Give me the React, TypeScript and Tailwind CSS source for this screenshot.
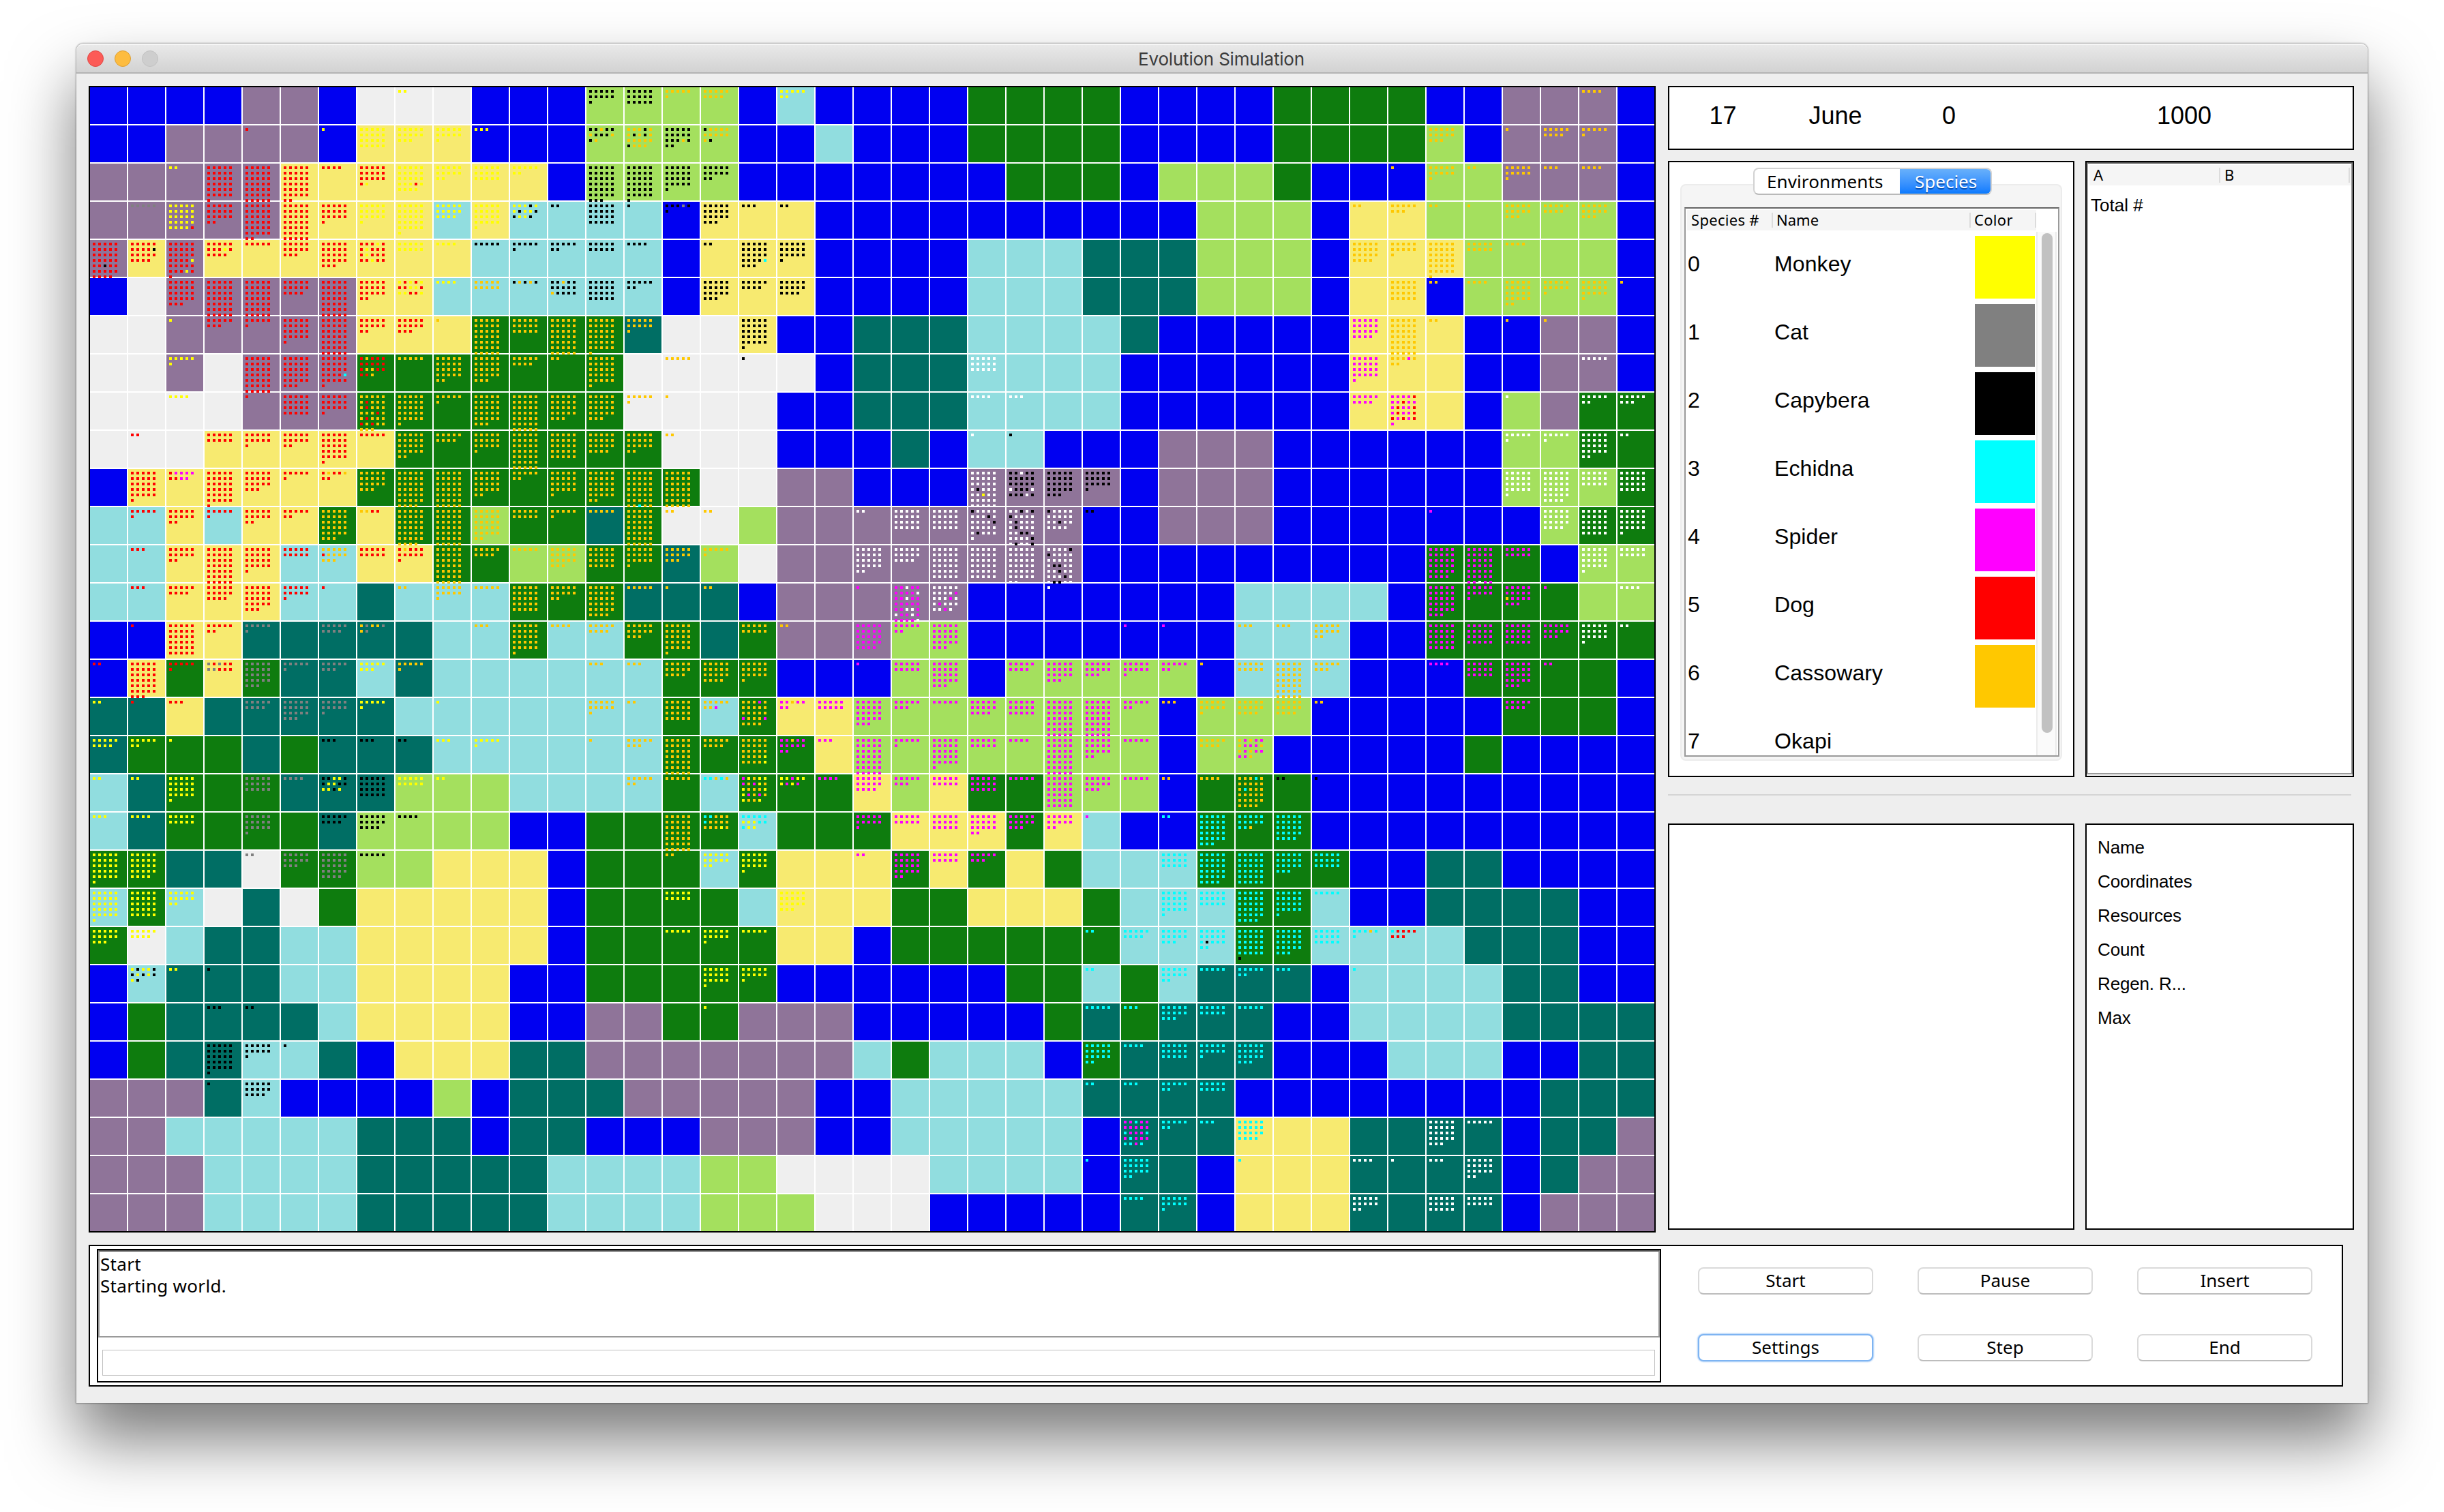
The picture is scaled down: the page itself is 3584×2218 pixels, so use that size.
import React from "react";

const UI = "font-['Noto_Sans','Open_Sans',sans-serif]";
const HELV = "font-['Liberation_Sans',Arial,sans-serif]";

const TERRAIN_COLORS: Record<string, string> = {
  B: "bg-[#0000f1]",
  P: "bg-[#8f7499]",
  W: "bg-[#efefef]",
  Y: "bg-[#f7ea70]",
  L: "bg-[#a4e05e]",
  C: "bg-[#91dddf]",
  G: "bg-[#0e7c0e]",
  T: "bg-[#006e64]",
};

const SPECIES_COLORS: Record<string, string> = {
  y: "bg-[#ffff00]",
  g: "bg-[#808080]",
  k: "bg-[#000000]",
  c: "bg-[#00ffff]",
  m: "bg-[#ff00ff]",
  r: "bg-[#ff0000]",
  o: "bg-[#ffc800]",
  w: "bg-[#ffffff]",
};

/* One letter per cell, one string per row of the world. */
const TERRAIN = [
  "BBBBPPBWWWBBBLLLLBCBBBBGGGGBBBBGGGGBBPPPB",
  "BBPPPPBYYYBBBLLLLBBCBBBGGGGBBBBGGGGLBPPPB",
  "PPPPPYYYYYYYBLLLLBBBBBBBGGGBLLLGBBBLLPPPB",
  "PPPPPYYYYCYCCCCBYYYBBBBBBBBBBLLLBYYLLLLLB",
  "PYPYYYYYYYCCCCCBYYYBBBBCCCTTTLLLBYYYLLLLB",
  "BWPPPPPYYCCCCCCBYYYBBBBCCCTTTLLLBYYBLLLLB",
  "WWPPPPPYYYGGGGTWWYBBTTTCCCCTBBBBBYYYBBPPB",
  "WWPWPPPGGGGGGGWWWWWBTTTCCCCBBBBBBYYYBBPPB",
  "WWWWPPPGGGGGGGWWWWBBTTTCCCCBBBBBBYYYBLPGG",
  "WWWYYYYYGGGGGGGWWWBBBTBCCBBBPPPBBBBBBLLGG",
  "BYYYYYYGGGGGGGGGWWPPBBBPPPPBPPPBBBBBBLLLG",
  "CCYCYYGYGGLGGTGWWLPPPPPPPPBBPPPBBBBBBBLGG",
  "CCYYYCCYYGGLLGGTLWPPPPPPPPBBBBBBBBBGGGBLL",
  "CCYYYCCTCCCGGGTTTBPPPPPBBBBBBBCCCCBGGGGLL",
  "BBYYTTTTTCCGCCGGTGPPPLLBBBBBBBCCCBBGGGGGG",
  "BYGYGTTCTCCCCCCGGGBBBLLBLLLLLBCCCBBBGGGGB",
  "TTYTTTTTCCCCCCCGCGYYLLLLLLLLBLLLBBBBBGGGB",
  "TGGGTGTTTCCCCCCGGGGYLLLLLLLLBLLBBBBBGBBBB",
  "CTGGGTTTLLLCCCCGCGGGYLYGGLLLBGGGBBBBBBBBB",
  "CTGGGGTLLLLBBGGGGCGGGYYYGYCBBGGGBBBBBBBBB",
  "GGTTWGGLLYYYBGGGCGYYYGYGYGCCCGGGGBBTTBBBB",
  "CGCWTWGYYYYYBGGGGCYYYGGYYYGCCCGGCBBTTTTBB",
  "GWCTTCCYYYYYBGGGGGYYBGGGGGGCCCGGCCCCTTTBB",
  "BCTTTCCYYYYBBGGGGGBBBBBBGGCGCTTTBCCCCTTBB",
  "BGTTTTCYYYYBBPPGGPPPBBBBBGTGTTTBBCCCCTTTT",
  "BGTTCCTBYYYTTPPPPPPPCGCCCBGTTTTBBBCCCBBTT",
  "PPPTCBBBBLBTTTPPPPPBBCCCCCTTTTBBBBBBBBTTT",
  "PPCCCCCTTTBTTBBBPPPBBCCCCCBTTTYYYTTTTBTTP",
  "PPPCCCCTTTTTCCCCLLWWWWCCCCBTTBYYYTTTTBTPP",
  "PPPCCCCTTTTTCCCCLLLWWWBBBBBTTBYYYTTTTBPPP",
];

/* Creatures living in each cell: "column:runs", a run being a species letter and a count. */
const CREATURES = [
  "8:y2 13:k11 14:k15 15:o6 16:o9 18:y7 39:o4",
  "4:r1 6:y1 7:y20 8:y13 9:y11 10:y3 13:k2o1k2o1k3o1k1o1 14:o3k1o2k1o1k1o6k1o3 15:k13o1k3 16:k1o10k1 35:o13 37:o1 38:o9 39:o6",
  "2:y2 3:r31 4:r35 5:r32 6:r4 7:r16y1 8:y18r1y5 9:y12 10:y15 11:y7 13:k33 14:k31 15:k21 16:k12 34:o1 35:o11 36:o2 37:o11 38:o3 39:o4",
  "1:g5 2:y24r1 3:r17 4:r32 5:r35 6:r16 7:y16 8:y26 9:y14 10:y21 11:y3k1y2k1y2k2y2k1 12:k2 13:k20 14:k1 15:k3g1k2 16:k18 17:k3 18:k2 33:o2 34:o8 35:o2 36:o1 37:o13 38:o9 39:o13",
  "0:r22k1r11 1:r9k1r9 2:r19y1r8y1r2 3:r8y1r5 4:r5 5:r13 6:r23 7:r3y1r2y1r4y1r5y1r2 8:y10 9:y4 10:k5 11:k6 12:k7 13:k10 14:k4 16:k2 17:k19c1k3 18:k16 33:o19 34:o11 35:o31 36:o10 37:o4",
  "2:r23 3:r35 4:r35 5:r14 6:r35 7:r17 8:y1r1y1r1y1r2y2r1y2r2y1 9:y4 10:o10 11:k1o1k1o1k1 12:k2o1k7o1k4 13:k20 14:k7 16:k18 17:k9 18:k14 34:o20 35:o2 36:o4 37:o22 38:o11 39:o16 40:o1",
  "2:y1 3:r8 4:r6 5:r21 6:r35 7:r12 8:r13 9:o1 10:o35 11:o15 12:o35 13:o31 14:o11 17:k26 33:m19 34:o35 35:o2 37:o1 38:o1",
  "2:y6 4:r35 5:r28 6:r19c1r6 7:r1o1r9o2r4o1 8:o5 9:o22 10:o23 11:o9 12:o2 13:o26 15:o5 17:k1 23:w15 33:m21 34:o3m1o3 39:w5",
  "2:y4 4:r1 5:r20 6:r16 7:o6r1o4r1o6r1o2r1o3r1o1r1o5 8:o26 9:o6 10:o28 11:o35 12:o23 13:o23 14:o6 15:o1 23:w4 24:w3 33:m9 34:m4r1m2r1m3r1m2r1m1r1m2r2m1r1m1r1m1 37:w1 39:w7 40:w8",
  "1:r2 3:r10 4:r11 5:r12 6:r26 7:r5 8:o22 9:o9 10:o16 11:o35 12:o25 13:o19 14:o17 15:o2 23:w1 24:k1 37:w6 38:w6 39:w22 40:w2",
  "1:r26 2:r1m4r2m2 3:r31 4:r18 5:r6 6:r1o1r2o1r2 7:o18 8:o34 9:o35 10:o22 11:o7 12:o21 13:o27 14:o32c1o2 15:o35 23:w16k1w5y1w12 24:k2w1k12w1k3w1k3w1k1 25:k23 26:k16 37:w21 38:w29 39:w15 40:w20",
  "1:r6 2:r12 3:r6 4:r12 5:r7 6:o28 7:o2r2 8:o34 9:o35 10:o27 11:o10 12:o6 13:o5 14:o35 15:o2 16:o2 20:w2 21:w20 22:w20 23:k1w7k1w5k1w6k1w4 24:w2k1w1k2w5k1w4k1w5k2w5k1w1k1w2k1 25:k1w11k1w6 26:k2 35:m1 38:w19 39:w25 40:w21",
  "1:r3 2:r12 3:r35 4:r21 5:r10 6:o5r1o7 7:r10 8:r1o1r9 9:o35 10:o9 11:o5 12:o18 13:o20 14:o16 15:o13 16:o6 20:w22 21:w14 22:w30 23:w30 24:w32 25:w4k2w10k2w4k1w5k1w2k2w2 35:m29 36:m32w1m2 37:m10 39:w21 40:w10",
  "1:r3 2:r9 3:r14 4:r23 5:r11 6:r1 8:o2 9:o11 10:o5 11:o25 12:o12 13:o29 14:o5 15:o1 16:o2 20:m1 21:m2w1m6w1m2w1m9w2m1w1m2w1m5w1 22:w9m1w3m1w2m1w5m1w1 25:w1 35:m28 36:m11 37:m10o1m7 38:m1 40:w4",
  "1:r1 2:r30 3:r7 4:g6 6:g9 7:o1g1o2g1o1g1 10:o3 11:o26 12:o4 13:o9 14:o13 15:o26 17:o10 18:o2 20:m24 21:m7 22:m23 27:m1 28:m1 30:o3 31:o3 32:o12 35:m25 36:m20 37:m20 38:m13 39:w16 40:w2",
  "0:r2 1:r33 2:r6 3:g1r1g1r2g2r3 4:g23 5:g6 6:g8 7:y8 8:o6 13:o3 14:o3 15:o14 16:o19 17:o16 20:m1 21:m10 22:m23 24:m9 25:m18 26:m13 27:m11 28:m7 29:o1 30:o10 31:o35 32:o8 35:m4 36:m15 37:m23 38:m2",
  "0:y2 1:r1 2:r3 4:g9 5:g18 6:g11 7:y6 9:y1 13:o11 14:o2 15:o20 16:o7m1 17:o3m1o11m1o3m1o4 18:m2o1m4 19:m10 20:m23 21:m8 22:m5 23:m14 24:m15 25:m35 26:m35 27:m7 28:o3 29:o11 30:o14 31:o14 32:o2 37:m9",
  "0:y9 1:y7 2:y1 6:k3 7:k3 8:k2 9:y3 10:y6 13:o1 14:o8 15:o35 16:o9 17:o19y1o4y1 18:m2o1m9 19:m3 20:m35 21:m6 22:m26 23:m10 24:m4 25:m35 26:m17 27:m5 29:o9 30:o1m1o1m2o1m3o2m1o1m4o1",
  "0:y2 1:y2 2:y21 4:g15 5:g4 6:k2y2k2y2k2y2k1y1 7:k20 8:y10 9:y2 14:o7 15:o5 16:c2o1c1o1 17:m1y1o1y2m1o1m1y1o1y1o3y2m1o1m1o1y1o2y1 18:y2m1y3m1y1m1 19:m4 20:m14 21:m8 22:m10 23:m15 24:m5 25:m30 26:m13 27:m5 28:o2 29:o4 30:o3c1o7c1o17 31:k2 32:k1",
  "0:y3 1:y4 2:y10 4:g16 6:k9 7:k14 8:k4 15:o35 16:c2o3c1o7y1o1 17:c5y3c3y2 20:m11 21:m10 22:m15 23:m17 24:m13 25:m12 26:m1 28:c2 29:c28 30:c12o1 31:c24",
  "0:y26 1:y24 4:g2 5:g13 6:g24 7:k5 15:o2 16:y12 17:y16 20:m2 21:m22 22:m10 23:m8 28:c15 29:c29 30:c30 31:c18 32:c15",
  "0:y26 1:y25 2:y12 15:y10 18:y18 28:c21 29:c15 30:c29 31:c21 32:c5",
  "0:y13 1:y9 15:y5 16:y11 17:y5 26:c2 27:c9 28:c13 29:c11k1c5 30:c25k1 31:c23 32:c15 33:c3o1c2 34:c1r7",
  "1:y1k1y2k2y1k1y1k1y1k1 2:y2 3:k1 16:y16 17:y11 26:c2 28:c12 29:c5 30:c7 31:c3 33:c1",
  "3:k3 4:k2 16:y1 26:c5 27:c3 28:c13 29:c10 30:c5",
  "3:k26 4:k11 5:k1 26:c17 27:c4 28:c15 29:c11 30:c18",
  "3:k1 4:k14 26:c2 27:c3 28:c7 29:c10",
  "27:m2c1m7c1m3c1m1c1m3c2m1c1 28:c7 29:c3 30:c19 35:w23 36:w5",
  "26:c1 27:c17 30:c1 33:w4 34:w1 35:w3 36:w17",
  "27:c4 28:c11 33:w12 35:w15 36:w10",
];

const POPULATION: Record<number, string>[] = CREATURES.map((line) => {
  const row: Record<number, string> = {};
  line.split(" ").forEach((entry) => {
    const [col, runs] = entry.split(":");
    row[Number(col)] = runs.replace(/([a-z])(\d+)/g, (_, s: string, n: string) => s.repeat(Number(n)));
  });
  return row;
});

function Cell({ terrain, creatures }: { terrain: string; creatures?: string }) {
  return (
    <div className={`h-[54px] w-[54px] ${TERRAIN_COLORS[terrain]}`}>
      {creatures && (
        <div className="flex w-11 flex-wrap gap-1 pt-1 pl-1">
          {creatures.split("").map((s, i) => (
            <i key={i} className={`block size-1 ${SPECIES_COLORS[s]}`} />
          ))}
        </div>
      )}
    </div>
  );
}

function World() {
  return (
    <div className="grid w-[2298px] grid-cols-[repeat(41,54px)] gap-[2px] border-2 border-black bg-white">
      {TERRAIN.map((row, r) =>
        row.split("").map((t, c) => <Cell key={`${r}-${c}`} terrain={t} creatures={POPULATION[r][c]} />)
      )}
    </div>
  );
}

function TitleBar() {
  return (
    <div className="flex h-11 items-center rounded-t-[10px] border-t-2 border-b-2 border-t-[#f6f6f6] border-b-[#b3b3b3] bg-linear-to-b from-[#e9e9e9] to-[#d2d2d2] pl-4">
      <div className="flex w-[240px] gap-4">
        <span className="size-6 rounded-full border border-[#df4744] bg-[#fc5b57]" />
        <span className="size-6 rounded-full border border-[#de9f34] bg-[#fdbc40]" />
        <span className="size-6 rounded-full border border-[#c2c2c2] bg-[#cecece]" />
      </div>
      <div className="w-[2846px] pt-[2px] text-center font-['Inter',sans-serif] text-[26px] leading-[38px] tracking-[-0.2px] text-[#3c3c3c]">
        Evolution Simulation
      </div>
    </div>
  );
}

function DatePanel() {
  return (
    <div className={`flex h-[94px] border-2 border-black bg-white text-center text-[36px] leading-[84px] text-black ${HELV}`}>
      <span className="w-[157px]">17</span>
      <span className="w-[173px]">June</span>
      <span className="w-[160px]">0</span>
      <span className="ml-[35px] w-[460px]">1000</span>
    </div>
  );
}

const SPECIES = [
  ["Monkey", "bg-[#ffff00]"],
  ["Cat", "bg-[#808080]"],
  ["Capybera", "bg-[#000000]"],
  ["Echidna", "bg-[#00ffff]"],
  ["Spider", "bg-[#ff00ff]"],
  ["Dog", "bg-[#ff0000]"],
  ["Cassowary", "bg-[#ffc800]"],
  ["Okapi", "bg-white"],
];

function SpeciesPanel() {
  return (
    <div className="relative h-[904px] w-[596px] border-2 border-black bg-white px-4 pt-8">
      <div className="h-[846px] rounded-lg border-2 border-[#ececec] bg-[#f5f5f5] pt-8 pr-[2px] pl-1">
        <div className="flex h-[806px] flex-col overflow-hidden border-2 border-[#9a9a9a] border-t-[#666] bg-white">
          <div className={`mt-[2px] ml-[2px] flex h-[30px] w-[512px] shrink-0 items-center bg-[#f5f5f5] text-[22px] tracking-[0.3px] text-black ${UI}`}>
            <span className="w-[124px] pb-[2px] pl-[6px] leading-[26px]">Species #</span>
            <span className="h-[22px] w-[2px] bg-[#dcdcdc]" />
            <span className="w-[288px] pb-[2px] pl-[5px] leading-[26px] tracking-normal">Name</span>
            <span className="h-[22px] w-[2px] bg-[#dcdcdc]" />
            <span className="w-[94px] pb-[2px] pl-[5px] leading-[26px]">Color</span>
            <span className="h-[22px] w-[2px] bg-[#dcdcdc]" />
          </div>
          <div className="flex min-h-0 flex-1">
            <div className={`w-[514px] pt-1 text-[32px] leading-[90px] tracking-[0.1px] text-black ${HELV}`}>
              {SPECIES.map(([name, color], i) => (
                <div key={name} className="flex h-[100px]">
                  <span className="w-[130px] pl-[3px]">{i}</span>
                  <span className="w-[294px]">{name}</span>
                  <span className={`mt-1 h-[92px] w-[88px] ${color}`} />
                </div>
              ))}
            </div>
            <div className="mt-[2px] w-[30px] border-x-2 border-[#ebebeb] bg-[#fafafa] pt-[2px] pl-[6px]">
              <div className="h-[733px] w-4 rounded-full bg-[#c1c1c1]" />
            </div>
          </div>
        </div>
      </div>
      <div className={`absolute top-2 left-[123px] flex h-10 w-[350px] overflow-hidden rounded-lg border-2 border-[#d2d2d2] border-b-[#b9b9b9] bg-white text-[26px] leading-9 text-black ${UI}`}>
        <span className="w-[213px] pl-[18px] tracking-[0.1px]">Environments</span>
        <span className="-my-[2px] -mr-[2px] flex-1 border-b-2 border-[#1a66e8] bg-linear-to-b from-[#6cb3fa] to-[#067aff] pl-[22px] leading-10 text-white [text-shadow:0_2px_1px_#0a4fae]">
          Species
        </span>
      </div>
    </div>
  );
}

function TotalsPanel() {
  return (
    <div className="h-[904px] w-[394px] border-2 border-black bg-white pb-[2px]">
      <div className="h-[898px] border-2 border-[#9a9a9a] border-t-[#555] pt-[2px] pl-[2px] text-black">
        <div className={`flex h-[30px] w-[384px] items-center bg-[#f5f5f5] text-[22px] leading-[26px] ${UI}`}>
          <span className="w-[190px] pb-[2px] pl-[6px]">A</span>
          <span className="h-[22px] w-[2px] bg-[#dcdcdc]" />
          <span className="w-[188px] pb-[2px] pl-[6px]">B</span>
          <span className="h-[22px] w-[2px] bg-[#dcdcdc]" />
        </div>
        <div className={`pt-[9px] pl-[2px] text-[26px] leading-[40px] ${HELV}`}>Total #</div>
      </div>
    </div>
  );
}

function DetailsPanel() {
  return (
    <div className={`h-[596px] w-[394px] border-2 border-black bg-white pt-2 pl-4 text-[26px] leading-[50px] tracking-[-0.15px] text-black ${HELV}`}>
      {["Name", "Coordinates", "Resources", "Count", "Regen. R...", "Max"].map((label) => (
        <div key={label}>{label}</div>
      ))}
    </div>
  );
}

function ActionButton({ label, focused }: { label: string; focused?: boolean }) {
  return (
    <button
      className={`h-10 w-[257px] rounded-lg border-2 bg-white pb-[2px] text-[26px] leading-[34px] text-black ${UI} ${
        focused ? "border-[#7eb4f2] shadow-[0_0_2px_1px_#a9cdf7]" : "border-[#dadada] border-b-[#bdbdbd]"
      }`}
    >
      {label}
    </button>
  );
}

function ControlBar() {
  return (
    <div className="mt-[18px] ml-[18px] flex h-[208px] w-[3306px] border-2 border-black bg-white pt-1 pl-[10px]">
      <div className="h-[196px] w-[2294px] border-2 border-black">
        <div className={`h-[128px] border-2 border-[#9a9a9a] border-t-[#555] pt-[2px] pl-[1px] text-[26px] leading-8 tracking-[0.3px] text-black ${UI}`}>
          <div>Start</div>
          <div>Starting world.</div>
        </div>
        <input className="mt-[18px] ml-[6px] block h-[38px] w-[2277px] border border-[#c0c0c0] bg-white outline-none" />
      </div>
      <div className="mt-[27px] ml-[54px] grid h-[138px] grid-cols-[repeat(3,257px)] content-between gap-x-[65px]">
        <ActionButton label="Start" />
        <ActionButton label="Pause" />
        <ActionButton label="Insert" />
        <ActionButton label="Settings" focused />
        <ActionButton label="Step" />
        <ActionButton label="End" />
      </div>
    </div>
  );
}

export default function App() {
  return (
    <div className="h-[2218px] w-[3584px] overflow-hidden bg-white pt-16 pl-28">
      <div className="h-[1994px] w-[3360px] rounded-t-[10px] bg-[#eeeeee] shadow-[0_0_2px_1px_rgba(0,0,0,0.3),0_54px_96px_rgba(0,0,0,0.53)]">
        <TitleBar />
        <div className="flex pt-[18px] pl-[18px]">
          <World />
          <div className="ml-[18px] w-[1006px]">
            <DatePanel />
            <div className="mt-4 flex gap-4">
              <SpeciesPanel />
              <TotalsPanel />
            </div>
            <div className="mt-[25px] h-[2px] w-[1002px] bg-[#d4d4d4]" />
            <div className="mt-[41px] flex gap-4">
              <div className="h-[596px] w-[596px] border-2 border-black bg-white" />
              <DetailsPanel />
            </div>
          </div>
        </div>
        <ControlBar />
      </div>
    </div>
  );
}
